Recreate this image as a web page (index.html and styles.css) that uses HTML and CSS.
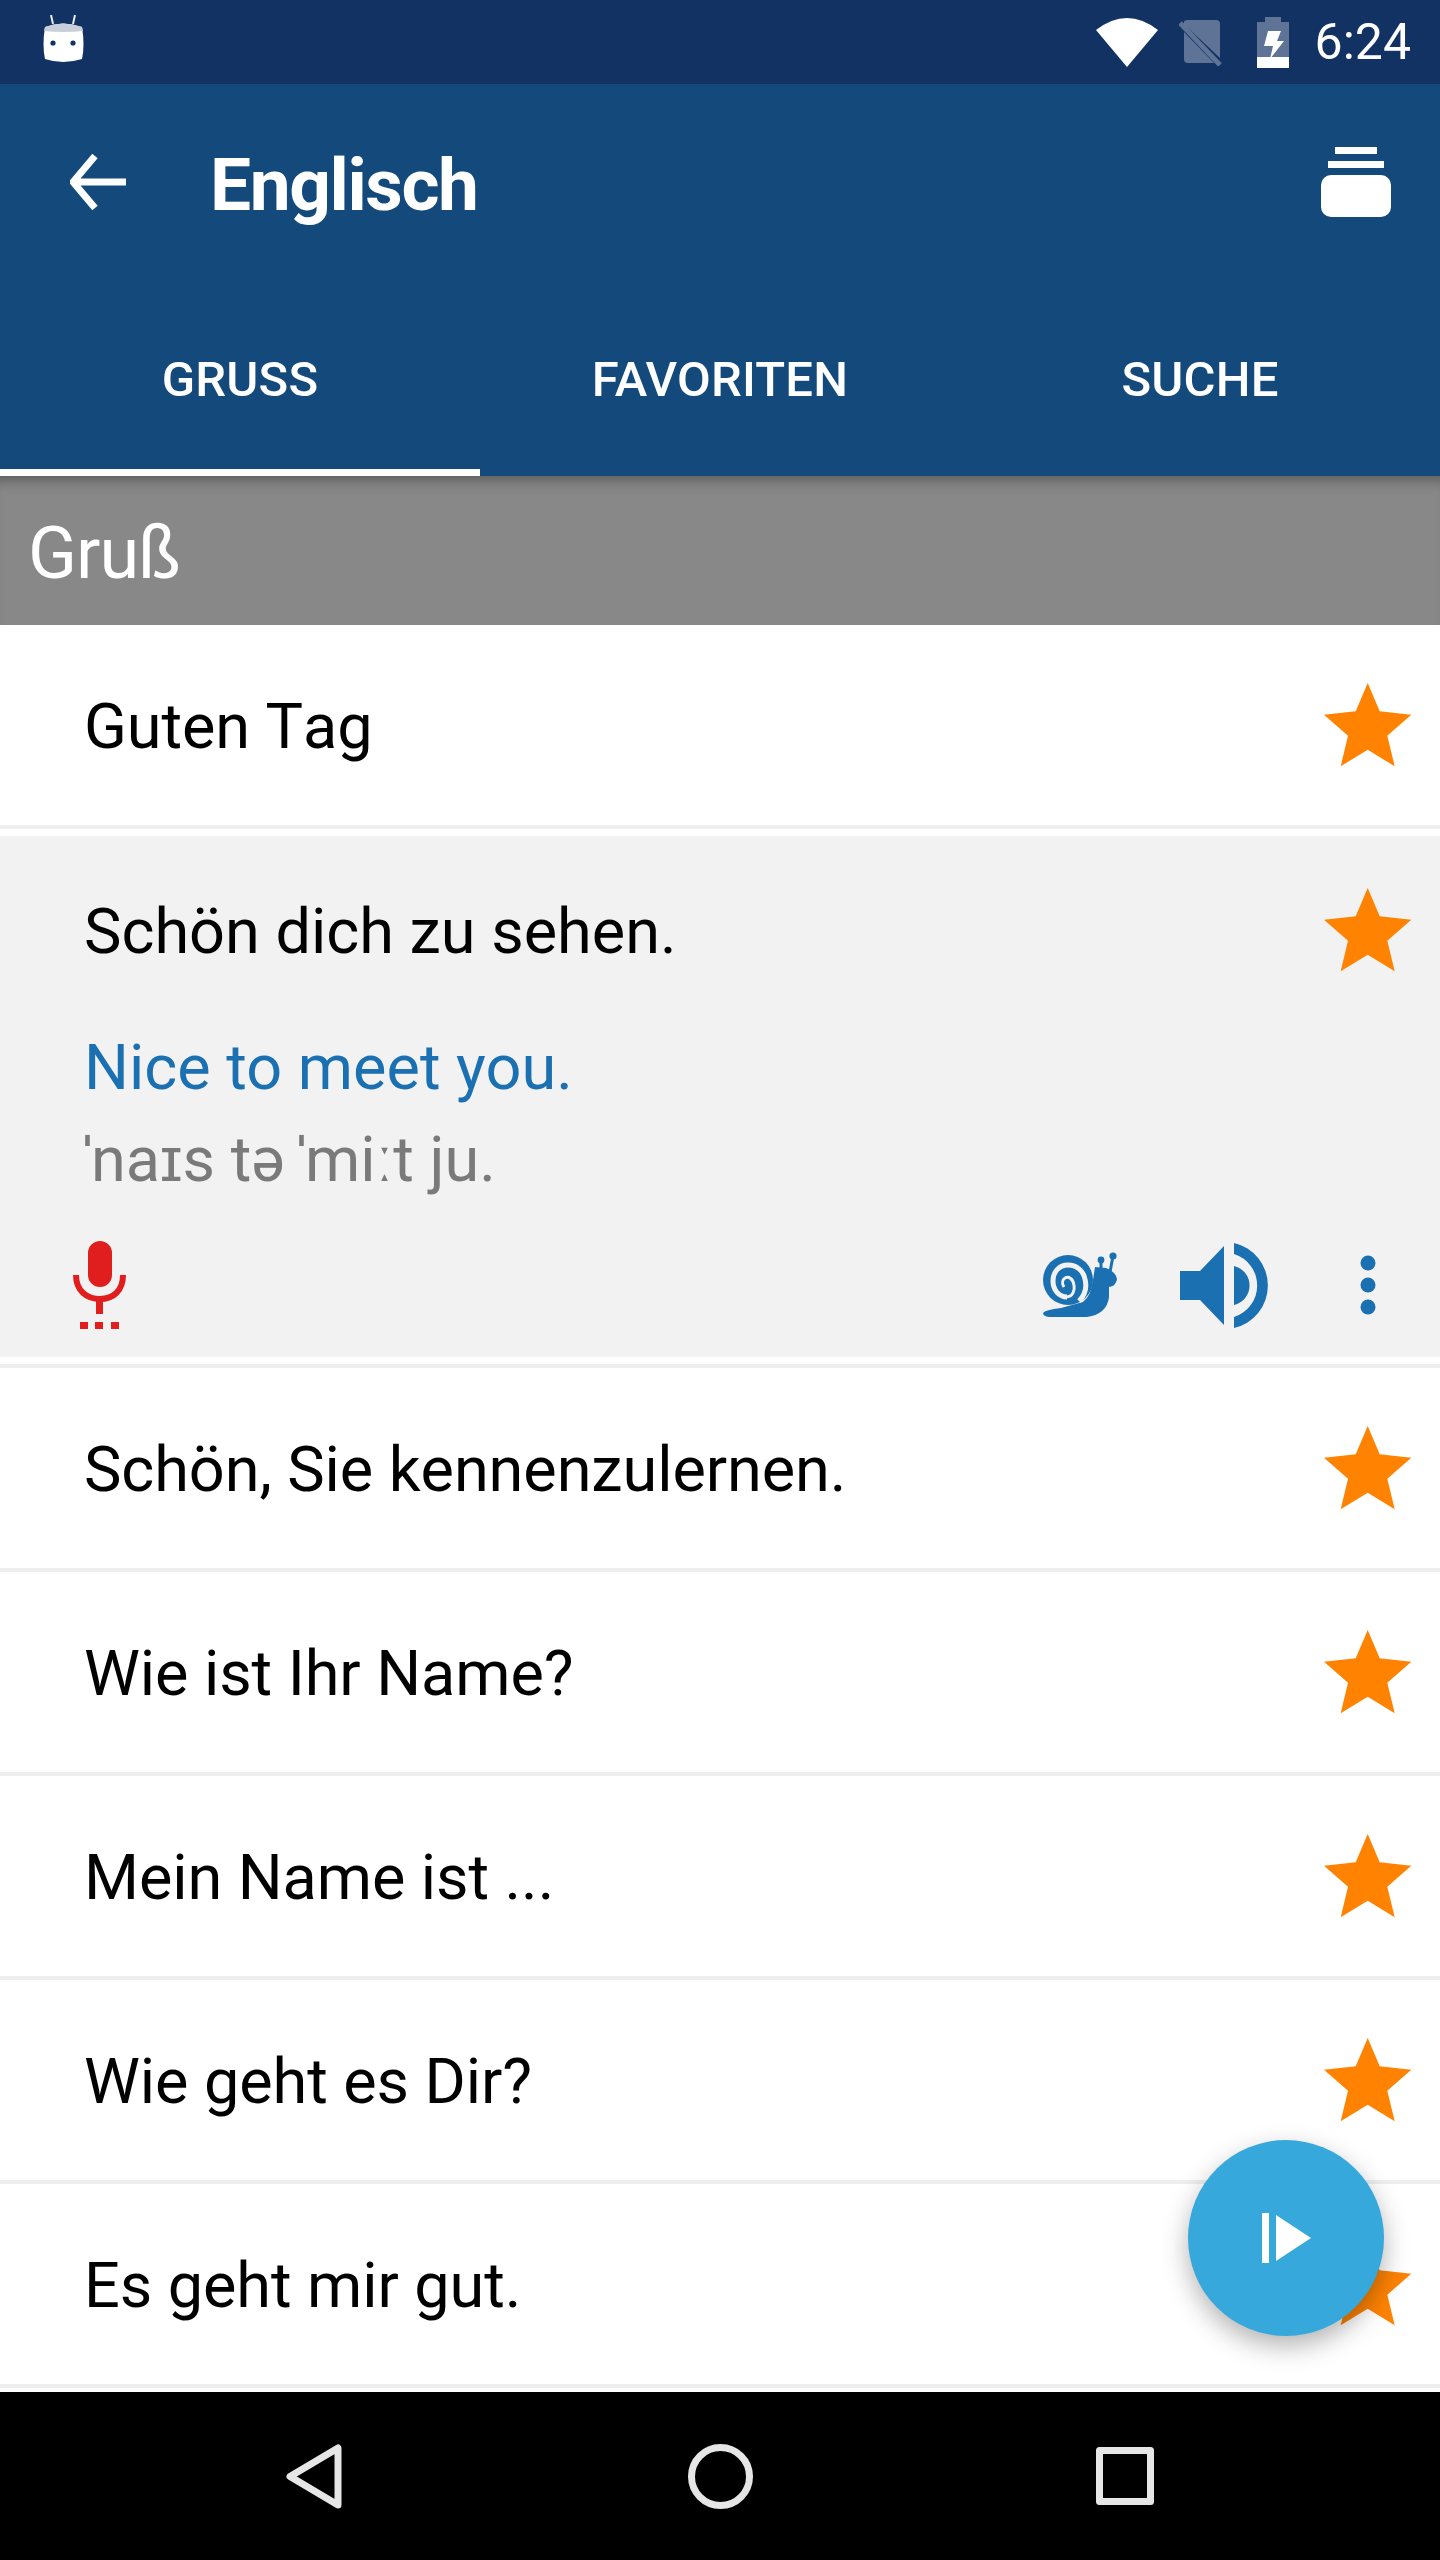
FILE: index.html
```html
<!DOCTYPE html>
<html>
<head>
  <title>Englisch</title>
  <link rel="stylesheet" href="styles.css">
</head>
<body>
  <div class="phone">
    <div class="statusbar">
      <svg class="android" width="41" height="48" viewBox="0 0 41 48">
        <path d="M8 0l2 9M32 0l-2 9" stroke="#e8ebf0" stroke-width="2" fill="none"/>
        <path d="M2 12Q20 5 39 12Q42 30 39 44Q20 50 2 44Q-1 30 2 12Z" fill="#fff"/>
        <path d="M2 12Q20 5 39 12L40 16Q20 18 1 16Z" fill="#c8cfd9"/>
        <circle cx="10" cy="28" r="2.6" fill="#133264"/>
        <circle cx="30" cy="28" r="2.6" fill="#133264"/>
      </svg>
      <div class="status-right">
        <svg class="wifi" width="62" height="49" viewBox="0 0 62 49">
          <path d="M0 12Q31 -12 62 12L31 49Z" fill="#fff"/>
        </svg>
        <svg class="sim" width="43" height="48" viewBox="0 0 43 48">
          <path d="M5 4Q5 2 9 2H37Q41 2 41 6V40L5 6Z M5 14L35 45H9Q5 45 5 41Z" fill="#fff" fill-opacity=".32"/>
          <path d="M1 5L41 47" stroke="#fff" stroke-opacity=".32" stroke-width="5"/>
        </svg>
        <svg class="battery" width="32" height="51" viewBox="0 0 32 51">
          <path d="M8 0H24V5H32V40H0V5H8Z" fill="#fff" fill-opacity=".32"/>
          <rect y="40" width="32" height="11" fill="#fff"/>
          <path d="M11 14H24L20 24H27L13 42L16 29H7Z" fill="#fff"/>
        </svg>
        <span class="clock">6:24</span>
      </div>
    </div>

    <div class="appbar">
      <div class="toolbar">
        <svg class="back" width="56" height="56" viewBox="0 0 56 56">
          <path d="M56 28H3M25 2L3 28L25 54" stroke="#fff" stroke-width="7" fill="none"/>
        </svg>
        <h1 class="title">Englisch</h1>
        <svg class="cards" width="70" height="70" viewBox="0 0 70 70">
          <rect x="14" width="42" height="7" fill="#fff"/>
          <rect x="7" y="14" width="56" height="7" fill="#fff"/>
          <rect y="28" width="70" height="42" rx="10" fill="#fff"/>
        </svg>
      </div>
      <div class="tabs">
        <div class="tab active">GRUSS</div>
        <div class="tab">FAVORITEN</div>
        <div class="tab">SUCHE</div>
      </div>
    </div>

    <div class="section">Gruß</div>

    <div class="list">
      <div class="row">
        <span class="phrase">Guten Tag</span>
        <svg class="star" viewBox="0 0 88 84"><use href="#star"/></svg>
      </div>

      <div class="open">
        <div class="open-inner">
          <div class="open-head">
            <span>Schön dich zu sehen.</span>
            <svg class="star" viewBox="0 0 88 84"><use href="#star"/></svg>
          </div>
          <div class="translation">Nice to meet you.</div>
          <div class="phonetic"><span class="stress">ˈ</span>naɪs <span class="tight">tə </span><span class="stress">ˈ</span>miːt ju.</div>
          <div class="actions">
            <svg class="mic" width="54" height="88" viewBox="0 0 54 88">
              <rect x="15" width="24" height="46" rx="12" fill="#e01e1e"/>
              <path d="M3 34C3 50 14 58 27 58C40 58 50 50 50 34" stroke="#e01e1e" stroke-width="6" fill="none"/>
              <rect x="23" y="58" width="7" height="15" fill="#e01e1e"/>
              <rect x="7" y="81" width="8" height="7" fill="#e01e1e"/>
              <rect x="22" y="81" width="8" height="7" fill="#e01e1e"/>
              <rect x="38" y="81" width="8" height="7" fill="#e01e1e"/>
            </svg>
            <svg class="snail" width="74" height="66" viewBox="0 0 74 66">
              <path d="M0 61Q2 58 18 56L40 50Q48 44 50 28L52 15L63 16Q73 20 74 27Q73 34 66 35L66 45Q64 62 44 65L6 65Q0 64 0 61Z" fill="#1b70b2"/>
              <circle cx="25" cy="28" r="25" fill="#1b70b2"/>
              <path d="M36 49C42 43 44 35 42 27C40 18 33 13 25 13C16 13 10 20 10 29C10 38 16 45 24 45" stroke="#f2f2f2" stroke-width="5" fill="none"/>
              <path d="M23 45C30 45 32 38 31 33C30 27 26 24 22 26C19 28 19 32 21 35" stroke="#f2f2f2" stroke-width="3" fill="none"/>
              <path d="M58 8V20M70 4L67 20" stroke="#1b70b2" stroke-width="3" fill="none"/>
              <circle cx="58" cy="8" r="3.4" fill="#1b70b2"/>
              <circle cx="70" cy="4" r="3.6" fill="#1b70b2"/>
            </svg>
            <svg class="speaker" width="88" height="86" viewBox="0 0 88 86">
              <path d="M0 29H20L44 4V83L20 58H0Z" fill="#1b70b2"/>
              <path d="M54 24A20 20 0 0 1 54 63Z" fill="#1b70b2"/>
              <path d="M54 1A43.6 43.6 0 0 1 54 86V75A33 33 0 0 0 54 12Z" fill="#1b70b2"/>
            </svg>
            <svg class="more" width="16" height="60" viewBox="0 0 16 60">
              <circle cx="8" cy="8" r="7.5" fill="#1b70b2"/>
              <circle cx="8" cy="30" r="7.5" fill="#1b70b2"/>
              <circle cx="8" cy="52" r="7.5" fill="#1b70b2"/>
            </svg>
          </div>
        </div>
      </div>

      <div class="row">
        <span class="phrase">Schön, Sie kennenzulernen.</span>
        <svg class="star" viewBox="0 0 88 84"><use href="#star"/></svg>
      </div>
      <div class="row">
        <span class="phrase">Wie ist Ihr Name?</span>
        <svg class="star" viewBox="0 0 88 84"><use href="#star"/></svg>
      </div>
      <div class="row">
        <span class="phrase">Mein Name ist ...</span>
        <svg class="star" viewBox="0 0 88 84"><use href="#star"/></svg>
      </div>
      <div class="row">
        <span class="phrase">Wie geht es Dir?</span>
        <svg class="star" viewBox="0 0 88 84"><use href="#star"/></svg>
      </div>
      <div class="row">
        <span class="phrase">Es geht mir gut.</span>
        <svg class="star" viewBox="0 0 88 84"><use href="#star"/></svg>
      </div>
    </div>

    <div class="fab">
      <svg width="49" height="50" viewBox="0 0 49 50">
        <rect width="7" height="50" fill="#fff"/>
        <path d="M14 2L49 25L14 48Z" fill="#fff"/>
      </svg>
    </div>

    <div class="navbar">
      <svg class="nav-back" width="56" height="65" viewBox="0 0 56 65">
        <path d="M52 4V61L4 32.5Z" stroke="#e6e6e6" stroke-width="7" stroke-linejoin="round" fill="none"/>
      </svg>
      <svg width="65" height="65" viewBox="0 0 65 65">
        <circle cx="32.5" cy="32.5" r="29" stroke="#e6e6e6" stroke-width="7" fill="none"/>
      </svg>
      <svg class="nav-recent" width="58" height="58" viewBox="0 0 58 58">
        <rect x="3.5" y="3.5" width="51" height="51" stroke="#e6e6e6" stroke-width="7" stroke-linejoin="round" fill="none"/>
      </svg>
    </div>
  </div>

  <svg width="0" height="0" class="defs">
    <defs>
      <path id="star" d="M43.7 0L55.7 28.3L87.3 31.7L63.3 52.7L70.7 83.3L43.7 66.7L16.7 83.3L24 52.7L0 31.7L31.7 28.3Z" fill="#ff8300"/>
    </defs>
  </svg>
</body>
</html>
```

FILE: styles.css
```css
body {
  margin: 0;
  font-family: Roboto, sans-serif;
  background: white;
}
.defs {
  display: block;
  height: 0;
}
.phone {
  position: relative;
  width: 1440px;
  height: 2560px;
  display: flex;
  flex-direction: column;
  overflow: hidden;
}
.statusbar {
  height: 84px;
  flex: none;
  background: #133264;
  display: flex;
  align-items: center;
  justify-content: space-between;
  padding: 0 29px 0 43px;
}
.android {
  margin-top: -6px;
}
.status-right {
  display: flex;
  align-items: center;
}
.sim {
  margin-left: 21px;
}
.battery {
  margin-left: 35px;
}
.clock {
  margin-left: 26px;
  color: white;
  font-size: 50px;
  line-height: 84px;
}
.appbar {
  height: 392px;
  flex: none;
  background: #144a7b;
  display: flex;
  flex-direction: column;
}
.toolbar {
  height: 196px;
  display: flex;
  align-items: center;
  padding: 0 49px 0 70px;
}
.title {
  flex: 1;
  margin: 6px 0 0 84px;
  color: white;
  font-size: 73px;
  font-weight: 700;
  letter-spacing: -1.4px;
}
.tabs {
  flex: 1;
  display: grid;
  grid-template-columns: repeat(3, 1fr);
}
.tab {
  display: flex;
  align-items: center;
  justify-content: center;
  color: white;
  font-size: 49px;
  font-weight: 500;
  letter-spacing: 0.2px;
  border-bottom: 7px solid transparent;
  padding-top: 10px;
}
.tab.active {
  border-bottom-color: white;
}
.section {
  height: 149px;
  flex: none;
  box-sizing: border-box;
  background: #888888;
  box-shadow: inset 0 14px 14px -10px rgba(0,0,0,0.35);
  color: white;
  font-size: 72px;
  font-weight: 400;
  letter-spacing: -1px;
  line-height: 149px;
  padding: 3px 0 0 28px;
}
.list {
  flex: 1;
  overflow: hidden;
  font-size: 63px;
  color: black;
}
.row {
  height: 204px;
  box-sizing: border-box;
  display: flex;
  align-items: center;
  justify-content: space-between;
  padding: 0 28px 0 84px;
  border-bottom: 4px solid #eeeeee;
}
.phrase {
  margin-top: 3px;
  font-kerning: none;
  letter-spacing: -0.08px;
}
.star {
  width: 88px;
  height: 84px;
  flex: none;
}
.open {
  padding: 7px 0;
  border-bottom: 4px solid #eeeeee;
}
.open-inner {
  background: #f2f2f2;
  height: 521px;
}
.open-head {
  height: 188px;
  display: flex;
  align-items: center;
  justify-content: space-between;
  padding: 0 28px 0 84px;
}
.open-head span {
  margin-top: 2px;
}
.translation {
  color: #1b70b2;
  line-height: 84px;
  margin-top: 2px;
  padding-left: 84px;
}
.phonetic {
  color: #7a7a7a;
  line-height: 84px;
  margin-top: 7px;
  padding-left: 77px;
}
.stress {
  font-family: "Liberation Sans", sans-serif;
  font-weight: 700;
  letter-spacing: -7px;
}
.tight {
  word-spacing: -9px;
}
.actions {
  height: 88px;
  margin-top: 39px;
  display: flex;
  align-items: center;
  padding-left: 73px;
}
.snail {
  margin-left: auto;
}
.speaker {
  margin-left: 63px;
}
.more {
  margin: 0 64px 0 92px;
}
.fab {
  position: absolute;
  right: 56px;
  bottom: 224px;
  width: 196px;
  height: 196px;
  border-radius: 50%;
  background: #36a8db;
  box-shadow: 0 10px 26px rgba(0,0,0,0.3);
  display: flex;
  align-items: center;
  justify-content: center;
}
.navbar {
  height: 168px;
  flex: none;
  background: black;
  display: grid;
  grid-template-columns: repeat(3, 404px);
  justify-content: center;
  justify-items: center;
  align-items: center;
}
.nav-back {
  margin-right: 4px;
}
.nav-recent {
  margin-left: 2px;
}
```
